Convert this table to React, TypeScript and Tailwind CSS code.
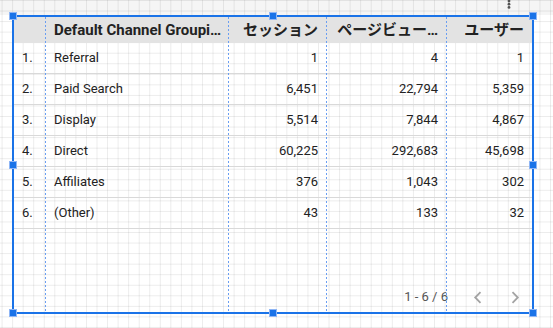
import React from 'react';

const rows = [
  { name: 'Referral', sessions: '1', views: '4', users: '1' },
  { name: 'Paid Search', sessions: '6,451', views: '22,794', users: '5,359' },
  { name: 'Display', sessions: '5,514', views: '7,844', users: '4,867' },
  { name: 'Direct', sessions: '60,225', views: '292,683', users: '45,698' },
  { name: 'Affiliates', sessions: '376', views: '1,043', users: '302' },
  { name: '(Other)', sessions: '43', views: '133', users: '32' },
];

const cols = 'grid grid-cols-[31px_183px_98px_120px_86px]';
const guides = [31, 214, 312, 432];

const Handle = ({ className }: { className: string }) => (
  <div className={`absolute w-[8px] h-[8px] bg-[#1a73e8] border border-[#8fb6f5] ${className}`} />
);

const Chevron = ({ dir }: { dir: 'left' | 'right' }) => (
  <svg width="9" height="13" viewBox="0 0 9 13" fill="none">
    <path
      d={dir === 'left' ? 'M7.5 1.2 2.2 6.5l5.3 5.3' : 'M1.5 1.2l5.3 5.3-5.3 5.3'}
      stroke="#a3a3a3"
      strokeWidth="1.8"
    />
  </svg>
);

export default function App() {
  return (
    <div className="relative w-[553px] h-[328px] overflow-hidden bg-white bg-[linear-gradient(to_right,rgba(0,0,0,0.075)_1px,transparent_1px),linear-gradient(to_bottom,rgba(0,0,0,0.075)_1px,transparent_1px)] bg-[size:10.55px_10.55px] bg-[position:1.6px_0px] font-['Roboto','Noto_Sans_CJK_JP',sans-serif] text-[#222]">
      <div className="h-[15px] bg-black/[0.04]" />
      <svg className="absolute left-[507px] top-0" width="4" height="9" viewBox="0 0 4 9">
        <circle cx="2" cy="1" r="1.4" fill="#555" />
        <circle cx="2" cy="4.2" r="1.4" fill="#555" />
        <circle cx="2" cy="7.4" r="1.4" fill="#555" />
      </svg>

      <div className="relative ml-[12px] w-[522px] h-[299px] border-2 border-[#1a73e8] flex flex-col">
        <div className={`${cols} h-[26px] bg-[#e3e3e3] text-[15px] font-bold leading-none`}>
          <div />
          <div className="flex items-center pl-[9px] whitespace-nowrap overflow-hidden">Default Channel Groupi…</div>
          <div className="flex items-center justify-end pr-2 whitespace-nowrap">セッション</div>
          <div className="flex items-center justify-end pr-2 whitespace-nowrap overflow-hidden">ページビュー…</div>
          <div className="flex items-center justify-end pr-2 whitespace-nowrap">ユーザー</div>
        </div>

        {rows.map((r, i) => (
          <div key={r.name} className={`${cols} h-[31px] border-b border-[#d9d9d9] text-[13px]`}>
            <div className="flex items-center pl-2">{i + 1}.</div>
            <div className="flex items-center pl-[9px]">{r.name}</div>
            <div className="flex items-center justify-end pr-2">{r.sessions}</div>
            <div className="flex items-center justify-end pr-2">{r.views}</div>
            <div className="flex items-center justify-end pr-2">{r.users}</div>
          </div>
        ))}

        <div className="flex-1" />

        <div className="h-[30px] flex items-center justify-end pr-[12px]">
          <span className="text-[13px] text-[#555]">1 - 6 / 6</span>
          <span className="ml-[25px] flex"><Chevron dir="left" /></span>
          <span className="ml-[29px] flex"><Chevron dir="right" /></span>
        </div>

        {guides.map((x) => (
          <div
            key={x}
            className="absolute top-0 bottom-0 w-px bg-[linear-gradient(to_bottom,#6a9ef2_50%,transparent_50%)] bg-[size:1px_4px]"
            style={{ left: x }}
          />
        ))}

        <Handle className="left-[-5px] top-[-5px]" />
        <Handle className="left-[255px] top-[-5px]" />
        <Handle className="right-[-5px] top-[-5px]" />
        <Handle className="left-[-5px] top-[144px]" />
        <Handle className="right-[-5px] top-[144px]" />
        <Handle className="left-[-5px] bottom-[-5px]" />
        <Handle className="left-[255px] bottom-[-5px]" />
        <Handle className="right-[-5px] bottom-[-5px]" />
      </div>
    </div>
  );
}
